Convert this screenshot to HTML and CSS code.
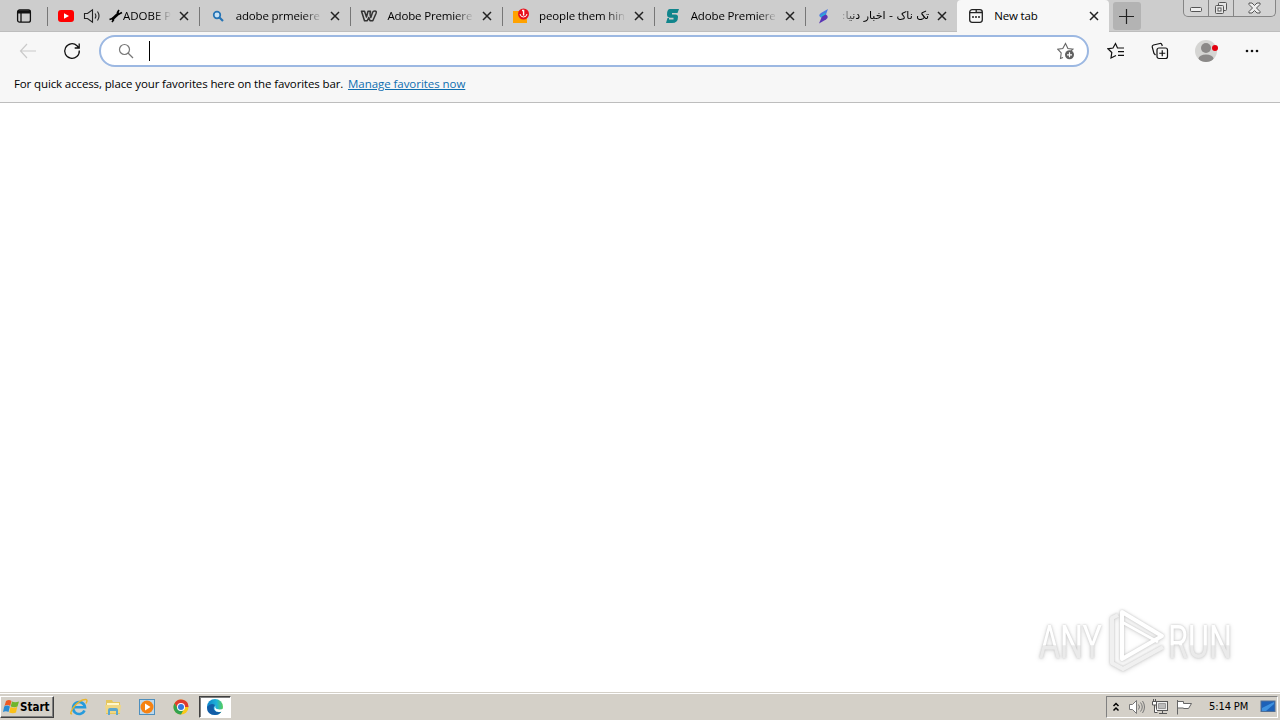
FILE: index.html
```html
<!DOCTYPE html>
<html lang="en">
<head>
  <meta charset="UTF-8">
  <meta name="viewport" content="width=device-width, initial-scale=1.0">
  <title>New tab</title>
  <link rel="stylesheet" href="styles.css">
</head>
<body>
  <svg class="defs" width="0" height="0">
    <symbol id="close" viewBox="0 0 10 10"><path d="M1 1l8 8M9 1L1 9" stroke="#222" stroke-width="1.5"/></symbol>
  </svg>

  <div class="tabstrip">
    <div class="actions">
      <svg width="16" height="16" viewBox="0 0 16 16" fill="none" stroke="#111" stroke-width="1.3"><rect x="1.6" y="2" width="12.8" height="12.2" rx="2"/><path d="M1.6 4h12.8" stroke-width="3"/><path d="M5 5v9"/></svg>
    </div>
    <div class="tab">
      <svg class="favicon" width="18" height="16" viewBox="0 0 18 16"><rect x="1" y="2" width="16" height="12" rx="3" fill="#f00"/><path d="M7 5.2v5.6L12 8z" fill="#fff"/></svg>
      <svg class="speaker" width="18" height="16" viewBox="0 0 18 16" fill="none" stroke="#222" stroke-width="1.1"><path d="M1.5 5.5h3L9.5 1.8v12.4L4.5 10.5h-3z"/><path d="M12 5.5q1.8 2.5 0 5M14.500 3.500q3 4.500 0 9"/></svg>
      <svg class="wrench" width="14" height="14" viewBox="0 0 14 14" fill="none" stroke="#000"><path d="M3 10.5L10 4" stroke-width="2.8"/><path d="M13 3.5L10 5 8.5 3.5 10 1M.5 10.5L3.5 9.5 4.5 11 3 13" stroke-width="1.6"/></svg>
      <span class="title t-adobe">ADOBE P</span>
      <svg class="close"><use href="#close"/></svg>
    </div>
    <div class="tab">
      <svg class="favicon" width="18" height="16" viewBox="0 0 18 16"><circle cx="8" cy="7" r="3.3" fill="#c8e2f5" stroke="#2674b5" stroke-width="1.7"/><path d="M10.5 9.5l3.5 3.5" stroke="#2674b5" stroke-width="2.2"/></svg>
      <span class="title">adobe prmeiere</span>
      <svg class="close"><use href="#close"/></svg>
    </div>
    <div class="tab">
      <svg class="favicon" width="18" height="16" viewBox="0 0 18 16" fill="none" stroke="#333" stroke-width="1.5" stroke-linejoin="round"><path d="M1.500 3.200H4.500L6.500 9 8 3.200H10.500Q9.500 5 10.800 9.500L12.500 4.500Q13 3 14.800 3 17 3 16 5.500L12.800 12.800H10L8.800 9.500 7.300 12.800H4.500z"/></svg>
      <span class="title">Adobe Premiere</span>
      <svg class="close"><use href="#close"/></svg>
    </div>
    <div class="tab">
      <svg class="favicon" width="18" height="16" viewBox="0 0 18 16"><path d="M1 3h8v6h6v6H1z" fill="#ffa200"/><circle cx="11.5" cy="6" r="5.5" fill="#e8101c"/><path d="M10 2.500h1.600v5" fill="none" stroke="#fff" stroke-width="1.4"/><path d="M8 6q.5 3 3.500 3t3.500-3" fill="none" stroke="#fff"/></svg>
      <span class="title">people them hin</span>
      <svg class="close"><use href="#close"/></svg>
    </div>
    <div class="tab">
      <svg class="favicon" width="18" height="16" viewBox="0 0 18 16"><path d="M6 1h9l-1.500 4H8v1.500h3.500q2.500 0 2.500 2.500 0 6-6 6H2l1.500-5H5v1.500h4.500V9.800H6.500Q3 9.800 3 6.500 3 1 6 1z" fill="#11858c"/></svg>
      <span class="title">Adobe Premiere</span>
      <svg class="close"><use href="#close"/></svg>
    </div>
    <div class="tab">
      <svg class="favicon" width="18" height="16" viewBox="0 0 18 16"><path d="M13 1L6 5Q2.500 7.500 6 9.500l3.500 1z" fill="#4b7be2"/><path d="M4 15.500l7-4q3.500-2.500 0-5L8 6z" fill="#5a35b5"/><path d="M5.500 8.500l5-3" stroke="#25aeda" stroke-width="1.5"/></svg>
      <span class="title rtl" dir="rtl" lang="fa">تک ناک - اخبار دنیا:</span>
      <svg class="close"><use href="#close"/></svg>
    </div>
    <div class="tab active">
      <svg class="favicon" width="18" height="16" viewBox="0 0 18 16" fill="none" stroke="#222" stroke-width="1.3"><rect x="2.7" y="1.7" width="12.6" height="12.6" rx="2.5"/><path d="M2.7 4.7h5.5q1 0 1-1V2M8.7 4.5h6.5"/><path d="M5 9h2M8 9h2M11 9h2" stroke-width="1.7"/></svg>
      <span class="title">New tab</span>
      <svg class="close"><use href="#close"/></svg>
    </div>
    <div class="new-tab">
      <svg width="15" height="15" viewBox="0 0 15 15"><path d="M7.5 0v15M0 7.5h15" stroke="#222" stroke-width="1.2"/></svg>
    </div>
    <div class="window-buttons">
      <div><svg width="13" height="6" viewBox="0 0 13 6"><rect x=".5" y=".5" width="11" height="4" rx="1" fill="#eee" stroke="#555"/></svg></div>
      <div><svg width="14" height="14" viewBox="0 0 14 14" fill="#e4e4e4" stroke="#555"><rect x="4.5" y="1.5" width="8" height="8" rx="1"/><rect x="1.5" y="4.5" width="8" height="8" rx="1"/><rect x="4" y="7" width="3" height="3" fill="#fff"/></svg></div>
      <div><svg width="13" height="12" viewBox="0 0 13 12"><path d="M1 1h3l2.500 2.500L9 1h3v1.500L8.500 6 12 9.500V11H9L6.500 8.500 4 11H1V9.500L4.500 6 1 2.500z" fill="#eee" stroke="#555"/></svg></div>
    </div>
  </div>

  <div class="toolbar">
    <svg class="back" width="18" height="16" viewBox="0 0 18 16" fill="none" stroke="#cacaca" stroke-width="1.2"><path d="M8 1L1.500 8 8 15M1.500 8H17"/></svg>
    <svg class="reload" width="18" height="18" viewBox="0 0 18 18" fill="none" stroke="#111" stroke-width="1.3"><path d="M16.300 8.500A7.300 7.300 0 1 1 14 3.700L16 6M16.200 1.500V6h-4.500"/></svg>
    <div class="address">
      <svg width="16" height="16" viewBox="0 0 16 16" fill="none" stroke="#777" stroke-width="1.2"><circle cx="6.5" cy="6.5" r="5"/><path d="M10 10l5 5"/></svg>
      <span class="caret"></span>
      <svg class="add-favorite" width="18" height="18" viewBox="0 0 18 18"><path d="M6 15.500l-2.500 1 .7-5.500L.8 7.200l5-.7L8.500 1.500l2.400 5 5 .7-2 1.800" fill="none" stroke="#666" stroke-width="1.1"/><circle cx="12.5" cy="12.8" r="4.5" fill="#606060"/><path d="M12.500 10.300v5M10 12.800h5" stroke="#fff" stroke-width="1.2"/></svg>
    </div>
    <svg class="favorites" width="18" height="18" viewBox="0 0 18 18" fill="none" stroke="#111" stroke-width="1.2"><path d="M9 13.500L4 16l.8-5.500L1 6.800l5-.8 2.500-4.500L10.500 6h6.500M11 9.700h6M11 13.300h6"/></svg>
    <svg class="collections" width="18" height="18" viewBox="0 0 18 18" fill="none" stroke="#111" stroke-width="1.2"><path d="M4.500 13L3 11.500 1.200 5Q1 3.500 2.500 3l6.500-1.500q1.500-.3 2 1.500l.3 1"/><rect x="6" y="6" width="10.5" height="10.5" rx="2"/><path d="M11.250 8.200v6M8.250 11.250h6"/></svg>
    <svg class="profile" width="24" height="24" viewBox="0 0 24 24"><defs><clipPath id="face"><circle cx="11" cy="12" r="11"/></clipPath></defs><circle cx="11" cy="12" r="11" fill="#d5d5d3"/><g clip-path="url(#face)" fill="#8b8988"><circle cx="11" cy="9" r="5"/><ellipse cx="11" cy="19.5" rx="7.5" ry="4"/></g><circle cx="20" cy="9" r="3" fill="#e3000f"/></svg>
    <svg class="more" width="14" height="4" viewBox="0 0 14 4" fill="#111"><circle cx="2" cy="2" r="1.3"/><circle cx="7" cy="2" r="1.3"/><circle cx="12" cy="2" r="1.3"/></svg>
  </div>

  <div class="favorites-bar">
    <span class="hint">For quick access, place your favorites here on the favorites bar.</span>
    <a href="#">Manage favorites now</a>
  </div>

  <div class="page">
    <svg class="watermark" width="204" height="68" viewBox="0 0 204 68">
      <defs>
        <linearGradient id="shade" x1="0" y1="0" x2="0" y2="1">
          <stop offset=".55" stop-color="#fff"/>
          <stop offset=".57" stop-color="#eaeaea"/>
        </linearGradient>
      </defs>
      <g fill="url(#shade)">
        <text x="4" y="51" textLength="63" lengthAdjust="spacingAndGlyphs">ANY</text>
        <text x="133" y="51" textLength="64" lengthAdjust="spacingAndGlyphs">RUN</text>
      </g>
      <g fill="none" stroke="#fff" stroke-width="4" stroke-linejoin="round">
        <path d="M83 8l-6 3v45l11 6 40-22" stroke="#f0f0f0"/>
        <path d="M87 49V5l40 24-40 23z"/>
        <path d="M87 15l36 20" stroke-width="3"/>
      </g>
    </svg>
  </div>

  <div class="taskbar">
    <div class="start">
      <svg width="17" height="16" viewBox="0 0 17 16"><path d="M3 2q3-2 5.500 0L7.200 7Q4.500 5.200 1.500 7z" fill="#ee5a24"/><path d="M9 2.500q3 1.500 7 0L14.500 7.500q-3 1.500-6.800 0z" fill="#70b52c"/><path d="M1.200 7.500q3-1.800 5.700 0L5.500 13Q3 11.500 0 13z" fill="#288bd4"/><path d="M7.500 8q3 1.500 6.700 0L13 13.500q-3 1.500-6.800 0z" fill="#fac019"/></svg>
      <span>Start</span>
    </div>
    <div class="quick">
      <div><svg width="18" height="18" viewBox="0 0 18 18" fill="none"><path d="M14.500 12.500A6 6 0 1 1 15 9.300H4.500" stroke="#269bdc" stroke-width="2.6"/><path d="M2 15.500Q-1 17 3 10 10 1 16 1.500q2 .5 0 4" stroke="#e9b52b" stroke-width="1.4"/></svg></div>
      <div><svg width="18" height="18" viewBox="0 0 18 18"><path d="M2 2h6l1 2h7v12H2z" fill="#e5c65c"/><path d="M3 5h12v4H3z" fill="#fff7ca"/><path d="M1 7h16l-1 8H2z" fill="#f0d783"/><path d="M4 17v-5q0-2 2-2h6q2 0 2 2v5h-2v-4H6v4z" fill="#5ca7cd"/></svg></div>
      <div><svg width="18" height="18" viewBox="0 0 18 18"><rect x="1.5" y="1.5" width="15" height="15" fill="#bcd8ed" stroke="#4e8fbd"/><circle cx="9" cy="9" r="6.5" fill="#f68212"/><path d="M7 5.500v7L12.500 9z" fill="#fff"/></svg></div>
      <div><svg width="18" height="18" viewBox="0 0 18 18"><circle cx="9" cy="9" r="7.5" fill="#f9c919"/><path d="M9 9H16.500A7.500 7.500 0 0 0 2.500 5.250L5.800 11z" fill="#df3b2f"/><path d="M2.500 5.250A7.500 7.500 0 0 0 9 16.500L12 11H6z" fill="#32a350"/><circle cx="9" cy="9" r="4" fill="#fff"/><circle cx="9" cy="9" r="3" fill="#3478df"/></svg></div>
      <div class="pressed"><svg width="18" height="18" viewBox="0 0 18 18"><defs><linearGradient id="edge"><stop stop-color="#0b83ca"/><stop offset=".6" stop-color="#1fb2d8"/><stop offset="1" stop-color="#58cf56"/></linearGradient></defs><circle cx="9" cy="9" r="8" fill="url(#edge)"/><path d="M1 9q4-5 8-2-3 3 0 6 3 2 6.500.5Q13 17 9 17 1 17 1 9z" fill="#125da7"/><path d="M9.500 7.500q-1 2.500 1.500 3.500 3 1 7-.5v4l-2.700-.7Q10 15 8.500 11.500 8 9 9.500 7.500z" fill="#fff"/></svg></div>
    </div>
    <div class="tray">
      <svg class="chevrons" width="8" height="10" viewBox="0 0 8 10" fill="none" stroke="#000" stroke-width="1.5"><path d="M1.500 4L4 1.500 6.500 4M1.500 8.500L4 6l2.500 2.500"/></svg>
      <svg width="18" height="16" viewBox="0 0 18 16" fill="#fff" stroke="#777"><path d="M1.500 5.500h3l4-4v13l-4-4h-3z"/><path d="M10.500 5.500q2 2.500 0 5M12.500 3.500q3.500 4.500 0 9M14.500 2q4 6 0 12" fill="none"/></svg>
      <svg class="network" width="18" height="16" viewBox="0 0 18 16" fill="#eee" stroke="#555"><rect x="4.5" y="2.5" width="11" height="9"/><path d="M7 14.500h8M10.500 12v2"/><path d="M.5 2.500h4v3.500h-4zM1.500 0v2M3.500 0v2M2.500 6v7.500h3" fill="#fff"/><path d="M6.500 4.500h7v5h-7z" fill="#bbb" stroke="#999"/></svg>
      <svg class="flag" width="17" height="16" viewBox="0 0 17 16" fill="#fff" stroke="#666"><path d="M1.500 1v14.500M1.500 2.500h6v2h8l-3 5H7.500V9h-6"/></svg>
      <span class="clock">5:14 PM</span>
      <svg class="desktop" width="17" height="15" viewBox="0 0 17 15"><rect x="1" y="2" width="14" height="10.5" fill="#1d61b8" stroke="#526f94"/><path d="M2 9l12-6v2L6 12H2z" fill="#3e91df"/></svg>
    </div>
  </div>
</body>
</html>
```
FILE: styles.css
```css
* {
  box-sizing: border-box;
}
body {
  margin: 0;
  height: 720px;
  overflow: hidden;
  display: flex;
  flex-direction: column;
  background: #fff;
  color: #000;
  font-family: "Open Sans", "Noto Sans", sans-serif;
  font-size: 11.5px;
}
svg {
  display: block;
  flex: none;
}
.defs {
  position: absolute;
}

/* tabs */
.tabstrip {
  display: flex;
  flex: none;
  height: 32px;
  background: #cdcdcd;
  border-bottom: 1px solid #bdbdbd;
}
.actions {
  width: 47px;
  padding: 8px 0 0 16px;
}
.tab {
  display: flex;
  align-items: center;
  width: 151.7px;
  height: 32px;
  padding: 0 10px 0 10px;
  position: relative;
}
.tab:not(.active)::before {
  content: "";
  position: absolute;
  left: 0;
  top: 7px;
  width: 1px;
  height: 19px;
  background: #777;
}
.favicon {
  width: 18px;
  margin-right: 9px;
}
.speaker {
  margin-left: -1px;
  margin-right: 8px;
}
.wrench {
  margin-right: 0;
}
.title {
  flex: 1;
  min-width: 0;
  overflow: hidden;
  white-space: nowrap;
  line-height: 18px;
  margin-right: 8px;
  letter-spacing: -0.15px;
  mask-image: linear-gradient(to right, #000 78%, transparent);
}
.t-adobe {
  letter-spacing: 0;
  mask-image: linear-gradient(to right, #000 65%, transparent);
}
.rtl {
  margin-left: -3px;
  margin-right: 8px;
  font-family: "DejaVu Sans", sans-serif;
  font-size: 11px;
  letter-spacing: 0;
  mask-image: linear-gradient(to left, #000 80%, transparent);
}
.close {
  width: 10px;
  height: 10px;
}
.active {
  background: #f7f7f7;
  border-radius: 4px 4px 0 0;
}
.active .title {
  mask-image: none;
}
.new-tab {
  display: flex;
  align-items: center;
  justify-content: center;
  width: 28px;
  height: 28px;
  margin: 2px 0 0 4px;
  border-radius: 3px;
  background: #b3b3b3;
}
.window-buttons {
  display: flex;
  width: 93px;
  height: 17px;
  margin-left: auto;
  margin-right: 4px;
  border: 1px solid #858585;
  border-top: 0;
  border-radius: 0 0 5px 5px;
  background: #d3d3d3;
}
.window-buttons div {
  display: flex;
  align-items: center;
  justify-content: center;
  width: 25px;
  border-right: 1px solid #858585;
}
.window-buttons div:first-child {
  padding-top: 4px;
}
.window-buttons div:last-child {
  flex: 1;
  border: 0;
}

/* toolbar */
.toolbar {
  display: flex;
  flex: none;
  align-items: center;
  height: 38px;
  padding-left: 19px;
  background: #f7f7f7;
}
.reload {
  margin-left: 26px;
}
.address {
  display: flex;
  align-items: center;
  width: 990px;
  height: 32px;
  margin-left: 18px;
  padding: 0 12px 0 17px;
  border: 2px solid #9cb8e2;
  border-radius: 16px;
  background: #fff;
}
.caret {
  width: 1px;
  height: 20px;
  margin-left: 15px;
  background: #000;
}
.add-favorite {
  margin-left: auto;
}
.favorites {
  margin-left: 18px;
}
.collections {
  margin-left: 26px;
}
.profile {
  margin-left: 26px;
}
.more {
  margin-left: 26px;
}
.favorites-bar {
  display: flex;
  flex: none;
  height: 33px;
  padding: 5px 14px 0;
  border-bottom: 1px solid #bdbdbd;
  background: #f7f7f7;
  line-height: 18px;
  white-space: nowrap;
}
.hint {
  width: 334px;
  letter-spacing: -0.12px;
}
.favorites-bar a {
  color: #0f6fb0;
  letter-spacing: -0.05px;
}

.page {
  display: flex;
  flex: 1;
  justify-content: flex-end;
  align-items: flex-end;
  padding: 0 41px 17px 0;
}
.watermark {
  filter: drop-shadow(0 0 1px #c4c4c4) drop-shadow(0 1px 2px #e2e2e2);
  font-family: Roboto, sans-serif;
  font-size: 46px;
}

/* taskbar */
.taskbar {
  display: flex;
  flex: none;
  align-items: center;
  height: 28px;
  padding: 0 2px 0 0;
  border-top: 1px solid #d4d0c8;
  box-shadow: inset 0 1px #fff;
  background: #d4d0c8;
}
.start {
  display: flex;
  align-items: center;
  width: 54px;
  height: 22px;
  padding-left: 2px;
  border: 1px solid;
  border-color: #fff #404040 #404040 #fff;
  box-shadow: inset -1px -1px #808080;
  font: bold 11.5px "DejaVu Sans Condensed", "DejaVu Sans", sans-serif;
}
.quick {
  display: flex;
  margin-left: 8px;
}
.quick div {
  display: flex;
  align-items: center;
  justify-content: center;
  width: 34px;
  height: 22px;
}
.quick .pressed {
  width: 32px;
  margin-left: 1px;
  border: 1px solid;
  border-color: #404040 #fff #fff #404040;
  box-shadow: inset 1px 1px #808080;
  background: #fff;
}
.tray {
  display: flex;
  align-items: center;
  width: 172px;
  height: 22px;
  margin-left: auto;
  padding-left: 5px;
  border: 1px solid;
  border-color: #808080 #fff #fff #808080;
}
.chevrons {
  margin-right: 8px;
}
.network {
  margin-left: 6px;
}
.flag {
  margin-left: 6px;
}
.clock {
  width: 42px;
  margin-left: 16px;
  font: 11px "DejaVu Sans Condensed", "DejaVu Sans", sans-serif;
  letter-spacing: -0.1px;
  white-space: nowrap;
}
.desktop {
  margin-left: auto;
}
```
